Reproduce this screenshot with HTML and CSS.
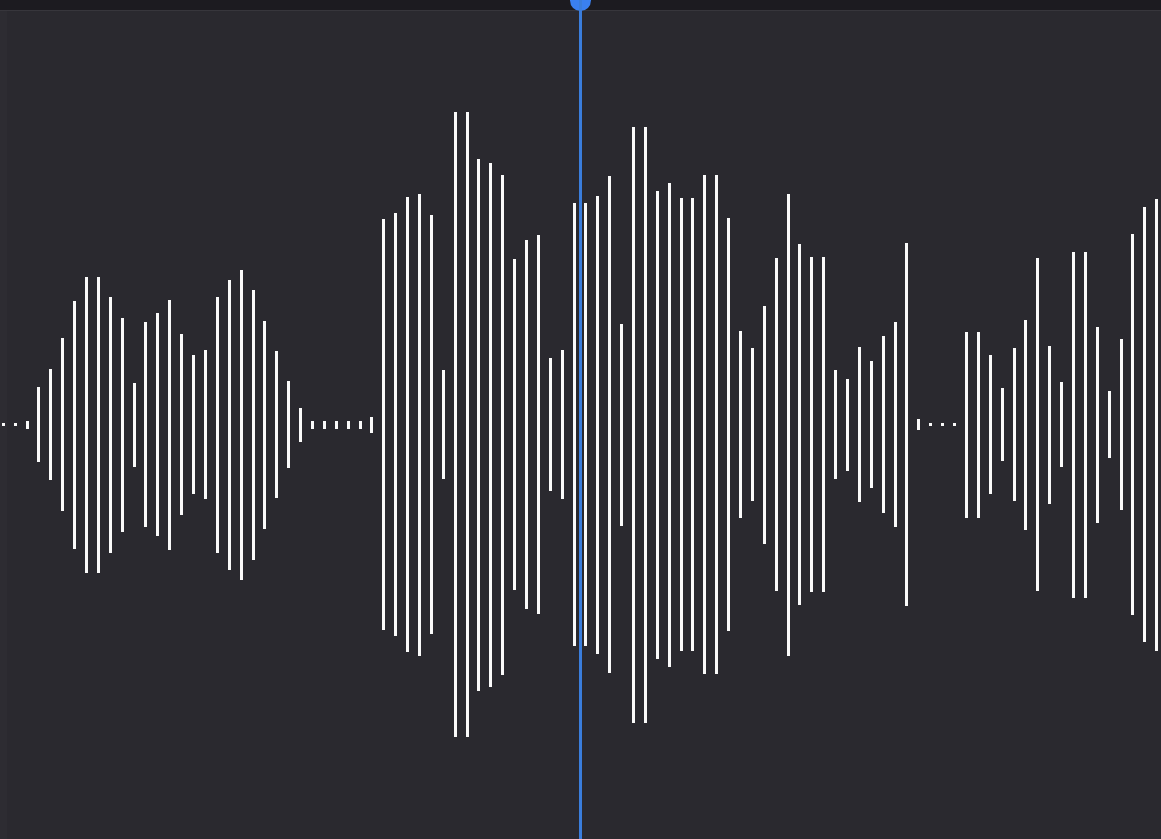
FILE: index.html
```html
<!DOCTYPE html>
<html lang="en">
<head>
<meta charset="utf-8">
<title>Waveform</title>
<link rel="stylesheet" href="styles.css">
</head>
<body>
<div class="editor">
  <div class="timebar"></div>
  <div class="track">
    <div class="wave">
      <span class="bar" style="height:3px"></span>
      <span class="bar" style="height:3px"></span>
      <span class="bar" style="height:8px"></span>
      <span class="bar" style="height:75px"></span>
      <span class="bar" style="height:111px"></span>
      <span class="bar" style="height:173px"></span>
      <span class="bar" style="height:248px"></span>
      <span class="bar" style="height:296px"></span>
      <span class="bar" style="height:296px"></span>
      <span class="bar" style="height:256px"></span>
      <span class="bar" style="height:214px"></span>
      <span class="bar" style="height:84px"></span>
      <span class="bar" style="height:205px"></span>
      <span class="bar" style="height:223px"></span>
      <span class="bar" style="height:250px"></span>
      <span class="bar" style="height:181px"></span>
      <span class="bar" style="height:139px"></span>
      <span class="bar" style="height:149px"></span>
      <span class="bar" style="height:256px"></span>
      <span class="bar" style="height:290px"></span>
      <span class="bar" style="height:310px"></span>
      <span class="bar" style="height:270px"></span>
      <span class="bar" style="height:208px"></span>
      <span class="bar" style="height:147px"></span>
      <span class="bar" style="height:87px"></span>
      <span class="bar" style="height:34px"></span>
      <span class="bar" style="height:8px"></span>
      <span class="bar" style="height:8px"></span>
      <span class="bar" style="height:8px"></span>
      <span class="bar" style="height:8px"></span>
      <span class="bar" style="height:8px"></span>
      <span class="bar" style="height:16px"></span>
      <span class="bar" style="height:411px"></span>
      <span class="bar" style="height:423px"></span>
      <span class="bar" style="height:455px"></span>
      <span class="bar" style="height:462px"></span>
      <span class="bar" style="height:419px"></span>
      <span class="bar" style="height:109px"></span>
      <span class="bar" style="height:625px"></span>
      <span class="bar" style="height:625px"></span>
      <span class="bar" style="height:532px"></span>
      <span class="bar" style="height:524px"></span>
      <span class="bar" style="height:500px"></span>
      <span class="bar" style="height:331px"></span>
      <span class="bar" style="height:369px"></span>
      <span class="bar" style="height:379px"></span>
      <span class="bar" style="height:133px"></span>
      <span class="bar" style="height:149px"></span>
      <span class="bar" style="height:443px"></span>
      <span class="bar" style="height:443px"></span>
      <span class="bar" style="height:458px"></span>
      <span class="bar" style="height:497px"></span>
      <span class="bar" style="height:202px"></span>
      <span class="bar" style="height:596px"></span>
      <span class="bar" style="height:596px"></span>
      <span class="bar" style="height:468px"></span>
      <span class="bar" style="height:484px"></span>
      <span class="bar" style="height:453px"></span>
      <span class="bar" style="height:453px"></span>
      <span class="bar" style="height:499px"></span>
      <span class="bar" style="height:499px"></span>
      <span class="bar" style="height:413px"></span>
      <span class="bar" style="height:187px"></span>
      <span class="bar" style="height:153px"></span>
      <span class="bar" style="height:238px"></span>
      <span class="bar" style="height:333px"></span>
      <span class="bar" style="height:462px"></span>
      <span class="bar" style="height:361px"></span>
      <span class="bar" style="height:335px"></span>
      <span class="bar" style="height:335px"></span>
      <span class="bar" style="height:109px"></span>
      <span class="bar" style="height:92px"></span>
      <span class="bar" style="height:155px"></span>
      <span class="bar" style="height:127px"></span>
      <span class="bar" style="height:177px"></span>
      <span class="bar" style="height:205px"></span>
      <span class="bar" style="height:363px"></span>
      <span class="bar" style="height:11px"></span>
      <span class="bar" style="height:3px"></span>
      <span class="bar" style="height:3px"></span>
      <span class="bar" style="height:3px"></span>
      <span class="bar" style="height:186px"></span>
      <span class="bar" style="height:186px"></span>
      <span class="bar" style="height:139px"></span>
      <span class="bar" style="height:73px"></span>
      <span class="bar" style="height:153px"></span>
      <span class="bar" style="height:210px"></span>
      <span class="bar" style="height:333px"></span>
      <span class="bar" style="height:158px"></span>
      <span class="bar" style="height:85px"></span>
      <span class="bar" style="height:346px"></span>
      <span class="bar" style="height:346px"></span>
      <span class="bar" style="height:196px"></span>
      <span class="bar" style="height:67px"></span>
      <span class="bar" style="height:171px"></span>
      <span class="bar" style="height:381px"></span>
      <span class="bar" style="height:435px"></span>
      <span class="bar" style="height:452px"></span>
    </div>
  </div>
  <div class="playhead">
    <span class="playhead-knob"></span>
    <span class="playhead-line"></span>
  </div>
</div>
</body>
</html>
```

FILE: styles.css
```css
html, body {
  margin: 0;
  padding: 0;
  height: 100%;
  overflow: hidden;
  background: #2a292f;
  font-family: "Liberation Sans", Arial, sans-serif;
}

.editor {
  position: relative;
  width: 1161px;
  height: 839px;
  display: flex;
  flex-direction: column;
  background: #2a292f;
}

.timebar {
  height: 10px;
  flex: none;
  background: #1c1b20;
  border-bottom: 1px solid #37363c;
}

.track {
  flex: 1;
  display: flex;
  padding-bottom: 1px;
  background: linear-gradient(to right, #2d2c32 7px, transparent 7px);
}

.wave {
  flex: 1;
  display: flex;
  align-items: center;
  gap: 8.9px;
  padding-left: 1.8px;
}

.bar {
  flex: none;
  width: 3px;
  background: #fafafa;
}

.playhead {
  position: absolute;
  top: 0;
  bottom: 0;
  left: 570px;
  width: 21px;
}

.playhead-knob {
  position: absolute;
  left: 0;
  top: -10px;
  width: 21px;
  height: 21px;
  border-radius: 50%;
  background: #3a80f0;
}

.playhead-line {
  position: absolute;
  left: 9px;
  top: 0;
  bottom: 0;
  width: 3px;
  background: #3a7ddc;
}
```
